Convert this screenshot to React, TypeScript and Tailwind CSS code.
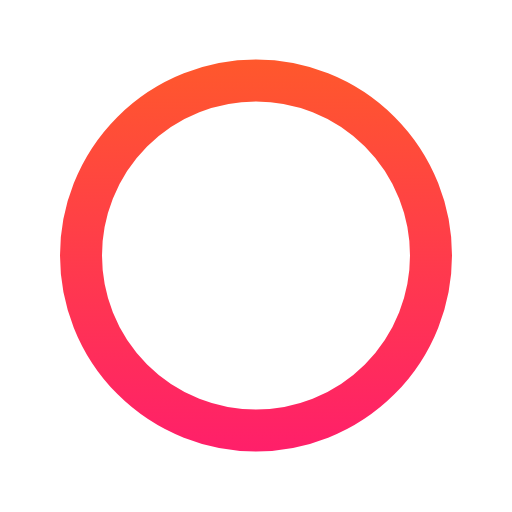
export default function App() {
  return (
    <div className="w-[512px] h-[512px] bg-white flex items-center justify-center">
      <svg width="512" height="512" viewBox="0 0 512 512">
        <defs>
          <linearGradient id="g" x1="0" y1="60" x2="0" y2="452" gradientUnits="userSpaceOnUse">
            <stop offset="0" stopColor="#FF582C" />
            <stop offset="1" stopColor="#FF1F6A" />
          </linearGradient>
        </defs>
        <circle cx="256" cy="255.5" r="175" fill="none" stroke="url(#g)" strokeWidth="42" />
      </svg>
    </div>
  );
}
